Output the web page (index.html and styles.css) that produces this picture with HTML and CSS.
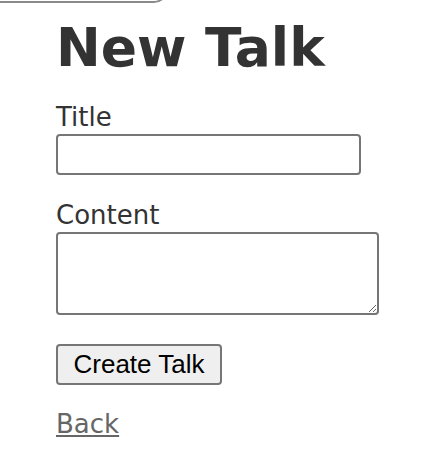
FILE: index.html
```html
<!DOCTYPE html>
<html>
<head>
<meta charset="utf-8">
<link rel="stylesheet" href="styles.css">
</head>
<body>
<div class="topbox"></div>
<main class="page">
  <h1 class="heading">New Talk</h1>
  <form class="form">
    <div class="field">
      <label class="label" for="title">Title</label>
      <input class="input" id="title" type="text">
    </div>
    <div class="field">
      <label class="label" for="content">Content</label>
      <textarea class="textarea" id="content"></textarea>
    </div>
    <div class="actions">
      <button class="button" type="button">Create Talk</button>
    </div>
  </form>
  <a class="back" href="#">Back</a>
</main>
</body>
</html>
```
FILE: styles.css
```css
html, body {
  margin: 0;
  padding: 0;
  background: #fff;
}
body {
  font-family: "DejaVu Sans", Verdana, sans-serif;
  color: #333;
  overflow: hidden;
}
.topbox {
  width: 176px;
  height: 30px;
  margin-top: -27px;
  margin-left: -8px;
  border: 2px solid #8a8a8a;
  border-radius: 0 0 14px 0;
  box-sizing: border-box;
}
.page {
  padding-left: 56px;
}
.heading {
  margin: 13px 0 0;
  font-size: 53.5px;
  font-weight: bold;
  line-height: normal;
  color: #333;
}
.form {
  margin-top: 23px;
  display: flex;
  flex-direction: column;
}
.field {
  display: flex;
  flex-direction: column;
  align-items: flex-start;
  margin-bottom: 25px;
}
.label {
  font-size: 26px;
  line-height: 30px;
  margin-bottom: 2px;
  color: #333;
}
.input {
  width: 305px;
  height: 41px;
  box-sizing: border-box;
  border: 2px solid #767676;
  border-radius: 4px;
  background: #fff;
  margin: 0;
}
.textarea {
  width: 323px;
  height: 83px;
  box-sizing: border-box;
  border: 2px solid #767676;
  border-radius: 4px;
  background: #fff;
  margin: 0;
  resize: both;
}
.actions {
  margin-top: 4px;
}
.button {
  width: 166px;
  height: 41px;
  box-sizing: border-box;
  font-family: "Liberation Sans", Arial, sans-serif;
  font-size: 26px;
  color: #000;
  background: #efefef;
  border: 2px solid #767676;
  border-radius: 4px;
  padding: 0;
  margin: 0;
}
.back {
  display: inline-block;
  margin-top: 24px;
  font-size: 26px;
  line-height: 30px;
  color: #666;
  text-decoration: underline;
}
```
